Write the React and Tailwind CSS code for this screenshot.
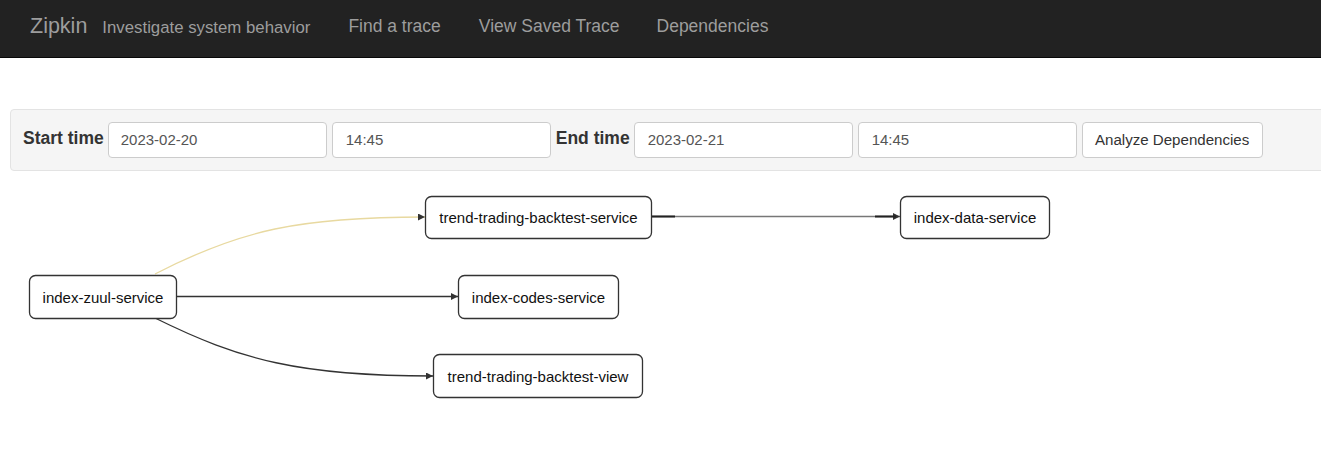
import React from "react";

const font = { fontFamily: '"Liberation Sans", Arial, sans-serif' };

function Node({ x, y, w, h, label }) {
  return (
    <g>
      <rect x={x + 0.5} y={y + 0.5} width={w} height={h} rx="6" ry="6" fill="#fff" stroke="#333" strokeWidth="1.3" />
      <text x={x + w / 2 + 0.5} y={y + h / 2 + 6} textAnchor="middle" fontSize="15" fill="#111" style={font}>
        {label}
      </text>
    </g>
  );
}

export default function App() {
  return (
    <div className="min-h-[452px] bg-white" style={font}>
      <nav className="h-[58px] bg-[#222222] border-b border-[#080808] flex items-center pl-[30px]">
        <span className="text-[21.5px] text-[#9d9d9d] leading-none mt-[-4px]">Zipkin</span>
        <span className="text-[16.8px] text-[#9d9d9d] ml-[15px] mt-[0px] leading-none">Investigate system behavior</span>
        <span className="text-[17.5px] text-[#9d9d9d] ml-[38px] mt-[-4px] leading-none">Find a trace</span>
        <span className="text-[17.5px] text-[#9d9d9d] ml-[38px] mt-[-4px] leading-none">View Saved Trace</span>
        <span className="text-[17.5px] text-[#9d9d9d] ml-[37px] mt-[-4px] leading-none">Dependencies</span>
      </nav>
      <div className="mt-[51px] ml-[10px] mr-[-10px] h-[62px] bg-[#f5f5f5] border border-[#e3e3e3] rounded-[4px] flex items-center pl-[12px] gap-[5px]">
        <span className="font-bold text-[17.5px] text-[#333] mt-[-4px] mr-[-1px]">Start time</span>
        <div className="w-[219px] h-[36px] bg-white border border-[#ccc] rounded-[4px] flex items-center pl-[12px] text-[15px] text-[#555]">2023-02-20</div>
        <div className="w-[219px] h-[36px] bg-white border border-[#ccc] rounded-[4px] flex items-center pl-[13px] text-[15px] text-[#555]">14:45</div>
        <span className="font-bold text-[17.5px] text-[#333] mt-[-4px] mr-[-1px]">End time</span>
        <div className="w-[219px] h-[36px] bg-white border border-[#ccc] rounded-[4px] flex items-center pl-[13px] text-[15px] text-[#555]">2023-02-21</div>
        <div className="w-[219px] h-[36px] bg-white border border-[#ccc] rounded-[4px] flex items-center pl-[13px] text-[15px] text-[#555]">14:45</div>
        <div className="w-[181px] h-[36px] bg-white border border-[#ccc] rounded-[4px] flex items-center justify-center text-[15.1px] text-[#333]">Analyze Dependencies</div>
      </div>
      <svg width="1321" height="260" className="block" viewBox="0 171 1321 260">
        <defs>
          <marker id="ah" viewBox="0 0 10 10" refX="10" refY="5" markerUnits="userSpaceOnUse" markerWidth="7" markerHeight="7" orient="auto">
            <path d="M0,0 L10,5 L0,10 z" fill="#333" />
          </marker>
        </defs>
        <path d="M155,274 C240,230 300,217 425,217" fill="none" stroke="#e8d9a0" strokeWidth="1.3" markerEnd="url(#ah)" />
        <path d="M176,296.5 L458,296.5" fill="none" stroke="#333" strokeWidth="1.3" markerEnd="url(#ah)" />
        <path d="M155,318 C240,360 300,376 433,376" fill="none" stroke="#333" strokeWidth="1.3" markerEnd="url(#ah)" />
        <path d="M651,216.5 L900,216.5" fill="none" stroke="#777" strokeWidth="1.3" markerEnd="url(#ah)" />
        <path d="M651,216.5 L675,216.5 M875,216.5 L896,216.5" fill="none" stroke="#222" strokeWidth="1.8" />
        <Node x={425} y={196} w={226} h={42} label="trend-trading-backtest-service" />
        <Node x={900} y={196} w={149} h={42} label="index-data-service" />
        <Node x={29} y={275} w={147} h={43} label="index-zuul-service" />
        <Node x={458} y={275} w={160} h={43} label="index-codes-service" />
        <Node x={433} y={354} w={209} h={43} label="trend-trading-backtest-view" />
      </svg>
    </div>
  );
}
